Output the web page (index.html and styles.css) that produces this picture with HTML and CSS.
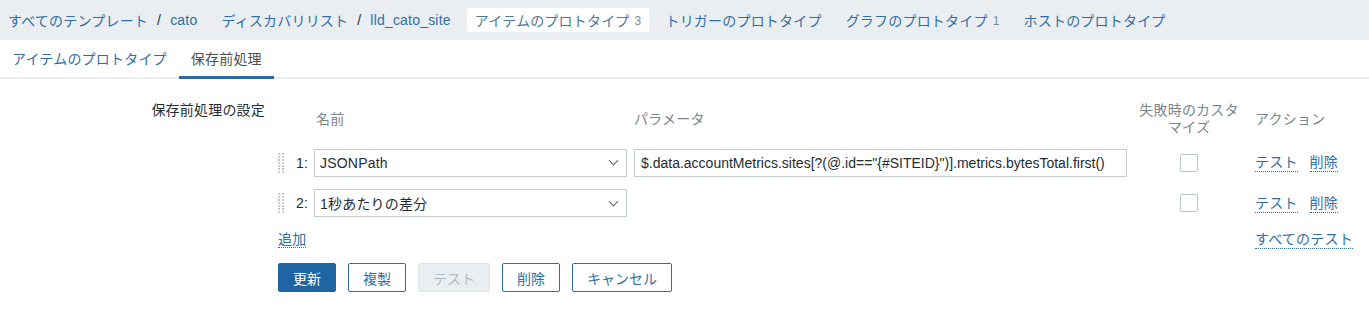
FILE: index.html
```html
<!DOCTYPE html>
<html lang="ja">
<head>
    <meta charset="UTF-8">
    <title>アイテムのプロトタイプ - 保存前処理</title>
    <link rel="stylesheet" href="styles.css">
</head>
<body>
    <!-- breadcrumbs + prototype tabs -->
    <nav class="top-nav">
        <div class="nav-item"><a href="#">すべてのテンプレート</a><span class="sep">/</span><a href="#">cato</a></div>
        <div class="nav-item"><a href="#">ディスカバリリスト</a><span class="sep">/</span><a href="#">lld_cato_site</a></div>
        <div class="nav-item selected"><a href="#">アイテムのプロトタイプ</a><sup class="count">3</sup></div>
        <div class="nav-item"><a href="#">トリガーのプロトタイプ</a></div>
        <div class="nav-item"><a href="#">グラフのプロトタイプ</a><sup class="count">1</sup></div>
        <div class="nav-item"><a href="#">ホストのプロトタイプ</a></div>
    </nav>

    <ul class="tabs">
        <li><a href="#">アイテムのプロトタイプ</a></li>
        <li class="active"><a href="#">保存前処理</a></li>
    </ul>

    <form class="form">
        <div class="form-row">
            <label class="form-label">保存前処理の設定</label>
            <div class="steps">
                <div class="head"></div>
                <div class="head"></div>
                <div class="head name-head">名前</div>
                <div class="head">パラメータ</div>
                <div class="head center">失敗時のカスタ<br>マイズ</div>
                <div class="head actions">アクション</div>

                <div class="handle">
                    <svg width="6" height="20" viewBox="0 0 6 20"><g fill="#c4ccd1"><rect x="0" y="0" width="2" height="2"/><rect x="4" y="0" width="2" height="2"/><rect x="0" y="3" width="2" height="2"/><rect x="4" y="3" width="2" height="2"/><rect x="0" y="6" width="2" height="2"/><rect x="4" y="6" width="2" height="2"/><rect x="0" y="9" width="2" height="2"/><rect x="4" y="9" width="2" height="2"/><rect x="0" y="12" width="2" height="2"/><rect x="4" y="12" width="2" height="2"/><rect x="0" y="15" width="2" height="2"/><rect x="4" y="15" width="2" height="2"/><rect x="0" y="18" width="2" height="2"/><rect x="4" y="18" width="2" height="2"/></g></svg>
                </div>
                <div class="num">1:</div>
                <div class="select"><span>JSONPath</span><span class="chevron"></span></div>
                <div class="text-input">$.data.accountMetrics.sites[?(@.id=="{#SITEID}")].metrics.bytesTotal.first()</div>
                <div class="center"><span class="checkbox"></span></div>
                <div class="actions"><a href="#" class="link">テスト</a><a href="#" class="link">削除</a></div>

                <div class="handle">
                    <svg width="6" height="20" viewBox="0 0 6 20"><g fill="#c4ccd1"><rect x="0" y="0" width="2" height="2"/><rect x="4" y="0" width="2" height="2"/><rect x="0" y="3" width="2" height="2"/><rect x="4" y="3" width="2" height="2"/><rect x="0" y="6" width="2" height="2"/><rect x="4" y="6" width="2" height="2"/><rect x="0" y="9" width="2" height="2"/><rect x="4" y="9" width="2" height="2"/><rect x="0" y="12" width="2" height="2"/><rect x="4" y="12" width="2" height="2"/><rect x="0" y="15" width="2" height="2"/><rect x="4" y="15" width="2" height="2"/><rect x="0" y="18" width="2" height="2"/><rect x="4" y="18" width="2" height="2"/></g></svg>
                </div>
                <div class="num">2:</div>
                <div class="select"><span>1秒あたりの差分</span><span class="chevron"></span></div>
                <div></div>
                <div class="center"><span class="checkbox"></span></div>
                <div class="actions"><a href="#" class="link">テスト</a><a href="#" class="link">削除</a></div>

                <div class="add"><a href="#" class="link">追加</a></div>
                <div class="actions"><a href="#" class="link">すべてのテスト</a></div>
            </div>
        </div>

        <div class="buttons">
            <button type="button" class="btn primary">更新</button>
            <button type="button" class="btn">複製</button>
            <button type="button" class="btn" disabled>テスト</button>
            <button type="button" class="btn">削除</button>
            <button type="button" class="btn">キャンセル</button>
        </div>
    </form>
</body>
</html>
```

FILE: styles.css
```css
* {
    margin: 0;
    padding: 0;
    box-sizing: border-box;
}
body {
    font-family: "Liberation Sans", "Noto Sans CJK JP", sans-serif;
    font-size: 14px;
    letter-spacing: 0.2px;
    color: #1f2c33;
    background: #fff;
}
a {
    color: #2f6ea6;
    text-decoration: none;
}

/* top navigation */
.top-nav {
    height: 40px;
    background: #ebeef0;
    display: flex;
    align-items: center;
    gap: 8px;
    padding-bottom: 1px;
}
.nav-item {
    display: flex;
    align-items: center;
    height: 24px;
    padding: 0 8px;
    border-radius: 2px;
    white-space: nowrap;
}
.nav-item .sep {
    color: #1f2c33;
    margin: 0 9px;
}
.nav-item.selected {
    background: #fff;
}
.nav-item.selected a {
    color: #4f7896;
}
.count {
    font-size: 12px;
    color: #768d99;
    margin-left: 5px;
    vertical-align: baseline;
    position: relative;
    top: 1px;
}

/* form tabs */
.tabs {
    list-style: none;
    display: flex;
    height: 39px;
    border-bottom: 2px solid #ebeef0;
}
.tabs li {
    padding: 0 12px;
    display: flex;
    align-items: center;
    border-bottom: 3px solid transparent;
    margin-bottom: -2px;
}
.tabs li.active {
    border-bottom-color: #2b6aa5;
}
.tabs li.active a {
    color: #4a4f52;
}

/* form */
.form {
    padding-top: 22px;
}
.form-row {
    display: flex;
    gap: 13px;
}
.form-label {
    width: 265px;
    text-align: right;
    line-height: 18px;
}
.steps {
    display: grid;
    grid-template-columns: 18px 18px 320px 493px 124px auto;
    grid-template-rows: 36px 28px 28px 20px;
    row-gap: 12px;
    align-items: center;
}
.steps > :nth-child(n+7):nth-child(-n+12) {
    margin-bottom: 1px;
}
.head {
    color: #7c868c;
    line-height: 17px;
}
.name-head {
    padding-left: 2px;
}
.center {
    text-align: center;
    display: flex;
    justify-content: center;
}
.actions {
    padding-left: 4px;
    display: flex;
    gap: 12px;
}
.handle {
    display: flex;
    align-items: center;
}
.num {
    color: #1f2c33;
}
.select {
    width: 313px;
    height: 28px;
    border: 1px solid #c5cdd2;
    display: flex;
    align-items: center;
    justify-content: space-between;
    padding: 0 9px 0 5px;
    background: #fff;
}
.chevron {
    width: 7px;
    height: 7px;
    border-right: 1px solid #5a646a;
    border-bottom: 1px solid #5a646a;
    transform: rotate(45deg);
    margin-top: -4px;
}
.text-input {
    height: 28px;
    border: 1px solid #c5cdd2;
    padding: 0 6px;
    display: flex;
    align-items: center;
    white-space: nowrap;
    overflow: hidden;
    letter-spacing: 0;
}
.checkbox {
    width: 18px;
    height: 18px;
    border: 1px solid #b9c3c8;
    border-radius: 2px;
    background: #fff;
}
.link {
    border-bottom: 1px dotted #2f6ea6;
    line-height: 18px;
}
.add {
    grid-column: 1 / 6;
}

/* buttons */
.buttons {
    display: flex;
    gap: 12px;
    padding: 14px 0 0 278px;
}
.btn {
    font-family: inherit;
    font-size: 14px;
    letter-spacing: 0;
    height: 29px;
    padding: 0 14px;
    border: 1px solid #2f6ea6;
    border-radius: 2px;
    background: #fff;
    color: #2f6ea6;
}
.btn.primary {
    background: #1f64a3;
    border-color: #1f64a3;
    color: #fff;
}
.btn:disabled {
    background: #ebeef0;
    border-color: #dfe4e7;
    color: #acbbc2;
}
```
